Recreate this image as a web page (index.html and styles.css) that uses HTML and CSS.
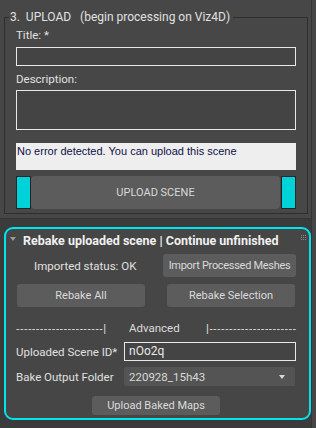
FILE: index.html
```html
<!DOCTYPE html>
<html>
<head>
<meta charset="utf-8">
<link rel="stylesheet" href="styles.css">
</head>
<body>
<div class="panel">
  <div class="main">
    <div class="rollout r1">
      <div class="group">
        <div class="group-head"><span class="legend">3.&nbsp; UPLOAD &nbsp;&nbsp;(begin processing on Viz4D)</span></div>
        <div class="group-body">
          <div class="label lbl-title">Title: *</div>
          <div class="input in-title"></div>
          <div class="label lbl-desc">Description:</div>
          <div class="input in-desc"></div>
          <div class="msg">No error detected. You can upload this scene</div>
          <div class="upload-row">
            <div class="cyan-block"></div>
            <div class="btn big">UPLOAD SCENE</div>
            <div class="cyan-block"></div>
          </div>
        </div>
      </div>
    </div>
    <div class="rollout r2">
      <div class="r2-head">
        <span class="tri"></span>
        <span class="r2-title">Rebake uploaded scene | Continue unfinished</span>
        <span class="grip">
          <i></i><i></i><i></i><i></i><i></i><i></i><i></i><i></i><i></i>
        </span>
      </div>
      <div class="row row1">
        <span class="label status">Imported status: OK</span>
        <div class="btn b-import">Import Processed Meshes</div>
      </div>
      <div class="row row2">
        <div class="btn b-all">Rebake All</div>
        <div class="btn b-sel">Rebake Selection</div>
      </div>
      <div class="row adv">
        <span class="dash">----------------------|</span>
        <span class="adv-label">Advanced</span>
        <span class="dash">|----------------------</span>
      </div>
      <div class="row row-id">
        <span class="label">Uploaded Scene ID*</span>
        <div class="input in-id">nOo2q</div>
      </div>
      <div class="row row-folder">
        <span class="label">Bake Output Folder</span>
        <div class="dropdown"><span>220928_15h43</span><span class="arrow"></span></div>
      </div>
      <div class="row row-maps">
        <div class="btn b-maps">Upload Baked Maps</div>
      </div>
    </div>
  </div>
  <div class="scroll"></div>
</div>
</body>
</html>
```
FILE: styles.css
```css
* { box-sizing: border-box; }
html, body {
  margin: 0;
  padding: 0;
  background: #3b3b3b;
  width: 316px;
  height: 428px;
  overflow: hidden;
  font-family: Roboto, "Liberation Sans", sans-serif;
  font-size: 11.5px;
  color: #dcdcdc;
}
.panel {
  display: flex;
  height: 428px;
}
.main {
  width: 311px;
  display: flex;
  flex-direction: column;
}
.scroll {
  flex: 1;
  background: #464646;
  border-left: 1px solid #353535;
}
.rollout.r1 {
  background: #474747;
  height: 219px;
  padding: 10px 3px 0 4px;
  border-bottom: 1px solid #353535;
}
.group {
  height: 204px;
  display: flex;
  flex-direction: column;
}
.group-head {
  display: flex;
  align-items: center;
  height: 14px;
}
.group-head::before {
  content: "";
  width: 4px;
  height: 7px;
  margin-top: 7px;
  border-top: 1px solid #2e2e2e;
  border-left: 1px solid #2e2e2e;
}
.group-head::after {
  content: "";
  flex: 1;
  height: 7px;
  margin-top: 7px;
  margin-left: 3px;
  border-top: 1px solid #2e2e2e;
  border-right: 1px solid #2e2e2e;
}
.legend {
  padding-left: 1px;
  font-size: 12px;
  line-height: 14px;
  color: #e0e0e0;
  white-space: pre;
}
.group-body {
  flex: 1;
  border: 1px solid #2e2e2e;
  border-top: none;
  padding: 4px 11px 0 11px;
}
.label {
  line-height: 14px;
  color: #e0e0e0;
  white-space: nowrap;
}
.input {
  border: 1px solid #e8e8e8;
  background: #444444;
}
.in-title { height: 19px; margin-top: 5px; }
.lbl-desc { margin-top: 6px; }
.in-desc { height: 40px; margin-top: 4px; }
.msg {
  margin-top: 13px;
  height: 27px;
  background: #eeeeee;
  color: #10104a;
  font-family: "Liberation Sans", sans-serif;
  font-size: 11px;
  padding: 2px 0 0 1px;
}
.upload-row {
  margin-top: 6px;
  height: 33px;
  display: flex;
}
.cyan-block {
  width: 15px;
  background: #00d2d9;
  border: 1px solid #252525;
}
.btn {
  background: #5c5c5c;
  border-radius: 3px;
  display: flex;
  align-items: center;
  justify-content: center;
  color: #dadada;
  font-size: 11px;
  white-space: nowrap;
}
.btn.big {
  flex: 1;
  margin: 0 1px 0 0;
  border-radius: 4px;
  font-size: 11px;
  color: #d8d8d8;
}
.rollout.r2 {
  margin-top: 8px;
  margin-left: 4px;
  height: 193px;
  border: 2px solid #00e4f0;
  border-radius: 9px;
  background: #464646;
  display: flex;
  flex-direction: column;
}
.r2-head {
  height: 22px;
  display: flex;
  align-items: center;
  padding-left: 4px;
}
.tri {
  width: 0;
  height: 0;
  border-left: 3px solid transparent;
  border-right: 3px solid transparent;
  border-top: 4px solid #9a9a9a;
  margin-right: 7px;
  margin-top: -3px;
}
.r2-title {
  font-weight: bold;
  font-size: 12.5px;
  color: #f0f0f0;
  flex: 1;
  white-space: nowrap;
}
.grip {
  display: grid;
  grid-template-columns: repeat(3, 1px);
  gap: 1px;
  margin-right: 3px;
  margin-top: -5px;
}
.grip i {
  width: 1px;
  height: 1px;
  background: #8a8a8a;
}
.row {
  display: flex;
  align-items: center;
}
.row1 {
  margin-top: 3px;
  height: 23px;
  padding-left: 28px;
}
.status { width: 129px; }
.b-import { width: 133px; height: 23px; letter-spacing: -0.3px; }
.row2 {
  margin-top: 7px;
  height: 23px;
  padding-left: 11px;
}
.b-all { width: 128px; height: 23px; }
.b-sel { width: 128px; height: 23px; margin-left: 22px; }
.adv {
  margin-top: 14px;
  height: 14px;
  padding-left: 10px;
  color: #dcdcdc;
}
.dash {
  width: 95px;
  font-family: "Liberation Sans", sans-serif;
  font-size: 11px;
  letter-spacing: 0.3px;
  color: #dcdcdc;
  line-height: 14px;
  white-space: nowrap;
}
.adv-label { margin-left: 18px; width: 77px; }
.row-id {
  margin-top: 7px;
  height: 19px;
  padding-left: 10px;
}
.row-id .label, .row-folder .label { width: 108px; }
.in-id {
  width: 172px;
  height: 19px;
  padding: 0 0 0 4px;
  line-height: 17px;
  color: #e8e8e8;
  font-size: 12px;
}
.row-folder {
  margin-top: 6px;
  height: 19px;
  padding-left: 10px;
}
.dropdown {
  width: 171px;
  height: 19px;
  background: #545454;
  border-radius: 2px;
  display: flex;
  align-items: center;
  justify-content: space-between;
  padding: 0 10px 0 5px;
  color: #d8d8d8;
}
.arrow {
  width: 0;
  height: 0;
  border-left: 3.5px solid transparent;
  border-right: 3.5px solid transparent;
  border-top: 4px solid #d8d8d8;
}
.row-maps {
  margin-top: 10px;
  height: 19px;
  padding-left: 86px;
}
.b-maps { width: 128px; height: 19px; }
```
